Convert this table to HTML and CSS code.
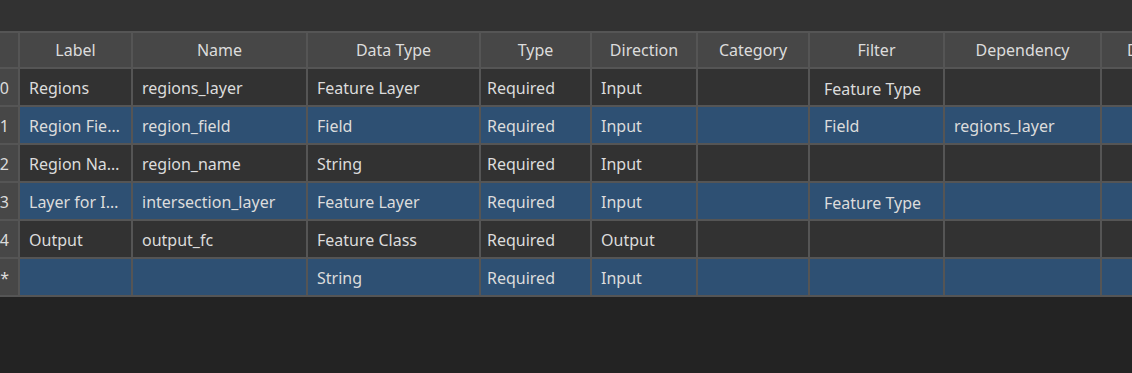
FILE: index.html
```html
<!DOCTYPE html>
<html>
<head>
<meta charset="utf-8">
<link rel="stylesheet" href="styles.css">
</head>
<body>
<div class="topbar"></div>
<div class="grid">
  <div class="hd rh"></div>
  <div class="hd">Label</div>
  <div class="hd">Name</div>
  <div class="hd">Data Type</div>
  <div class="hd">Type</div>
  <div class="hd">Direction</div>
  <div class="hd">Category</div>
  <div class="hd">Filter</div>
  <div class="hd">Dependency</div>
  <div class="hd last">Default</div>

  <div class="rh">0</div>
  <div class="c">Regions</div>
  <div class="c">regions_layer</div>
  <div class="c">Feature Layer</div>
  <div class="c t">Required</div>
  <div class="c">Input</div>
  <div class="c"></div>
  <div class="c f low">Feature Type</div>
  <div class="c"></div>
  <div class="c"></div>

  <div class="rh">1</div>
  <div class="c b">Region Fie…</div>
  <div class="c b">region_field</div>
  <div class="c b">Field</div>
  <div class="c b t">Required</div>
  <div class="c b">Input</div>
  <div class="c b"></div>
  <div class="c b f">Field</div>
  <div class="c b">regions_layer</div>
  <div class="c b"></div>

  <div class="rh">2</div>
  <div class="c">Region Na…</div>
  <div class="c">region_name</div>
  <div class="c">String</div>
  <div class="c t">Required</div>
  <div class="c">Input</div>
  <div class="c"></div>
  <div class="c f"></div>
  <div class="c"></div>
  <div class="c"></div>

  <div class="rh">3</div>
  <div class="c b">Layer for I…</div>
  <div class="c b">intersection_layer</div>
  <div class="c b">Feature Layer</div>
  <div class="c b t">Required</div>
  <div class="c b">Input</div>
  <div class="c b"></div>
  <div class="c b f low">Feature Type</div>
  <div class="c b"></div>
  <div class="c b"></div>

  <div class="rh">4</div>
  <div class="c">Output</div>
  <div class="c">output_fc</div>
  <div class="c">Feature Class</div>
  <div class="c t">Required</div>
  <div class="c">Output</div>
  <div class="c"></div>
  <div class="c f"></div>
  <div class="c"></div>
  <div class="c"></div>

  <div class="rh">*</div>
  <div class="c b"></div>
  <div class="c b"></div>
  <div class="c b">String</div>
  <div class="c b t">Required</div>
  <div class="c b">Input</div>
  <div class="c b"></div>
  <div class="c b f"></div>
  <div class="c b"></div>
  <div class="c b"></div>
</div>
</body>
</html>
```
FILE: styles.css
```css
html, body {
  margin: 0;
  padding: 0;
  background: #232323;
  overflow: hidden;
  width: 1132px;
  height: 373px;
}
body {
  font-family: "Noto Sans", "Open Sans", sans-serif;
  font-size: 16px;
  color: #dcdcdc;
}
.topbar {
  height: 31px;
  background: #323232;
}
.grid {
  display: grid;
  grid-template-columns: 18px 111px 173px 171px 109px 104px 110px 133px 155px 102px;
  grid-template-rows: 34px repeat(6, 36px);
  gap: 2px;
  background: #555555;
  border-top: 2px solid #555555;
  border-bottom: 2px solid #555555;
  width: max-content;
}
.grid > div {
  white-space: nowrap;
  overflow: hidden;
  display: flex;
  align-items: center;
}
.hd {
  background: #474747;
  justify-content: center;
}
.hd.last {
  justify-content: flex-start;
  padding-left: 25px;
}
.rh {
  background: #474747;
  justify-content: flex-end;
  padding-right: 9px;
  padding-top: 2px;
}
.hd.rh {
  padding-right: 0;
  padding-top: 0;
}
.c {
  background: #323232;
  padding-left: 9px;
  padding-top: 2px;
}
.c.b {
  background: #2e5073;
}
.c.t {
  padding-left: 6px;
}
.c.f {
  padding-left: 14px;
}
.c.low {
  padding-top: 4px;
}
```
